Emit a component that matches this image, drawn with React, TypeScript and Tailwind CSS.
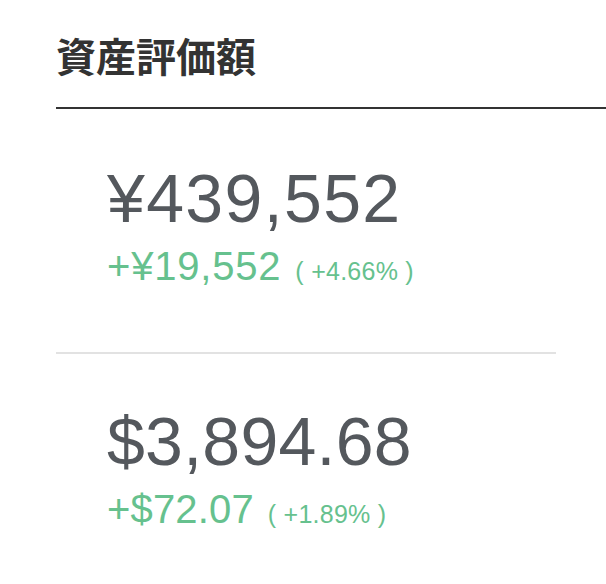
import React from "react";

type Holding = {
  total: string;
  change: string;
  percent: string;
  tracking: string;
};

const holdings: Holding[] = [
  { total: "¥439,552", change: "+¥19,552", percent: "( +4.66% )", tracking: "tracking-[0.02em]" },
  { total: "$3,894.68", change: "+$72.07", percent: "( +1.89% )", tracking: "tracking-[0.004em]" },
];

const HoldingRow = ({ item }: { item: Holding }) => {
  return (
    <div className="flex flex-col pl-[51px]">
      <div className={"text-[68px] leading-none text-[#54585d] " + item.tracking}>{item.total}</div>
      <div className="mt-[14px] flex flex-row items-baseline gap-[14px] text-[#66c18e]">
        <span className={"text-[40px] leading-none " + item.tracking}>{item.change}</span>
        <span className="text-[25px] leading-none tracking-[0.01em]">{item.percent}</span>
      </div>
    </div>
  );
};

const App = () => {
  return (
    <div className="min-h-[584px] bg-white font-['Liberation_Sans','Noto_Sans_CJK_JP',sans-serif]">
      <div className="pl-[56px]">
        <h1 className="pt-[35px] pb-[32px] border-b-2 border-[#333333] text-[40px] font-bold leading-none text-[#333333] font-['Noto_Sans_CJK_JP',sans-serif]">
          資産評価額
        </h1>
        <div className="flex flex-col w-[500px]">
          <div className="pt-[55px]">
            <HoldingRow item={holdings[0]} />
          </div>
          <div className="mt-[66px] h-[2px] bg-[#e2e2e2]" />
          <div className="pt-[53px]">
            <HoldingRow item={holdings[1]} />
          </div>
        </div>
      </div>
    </div>
  );
};

export default App;
